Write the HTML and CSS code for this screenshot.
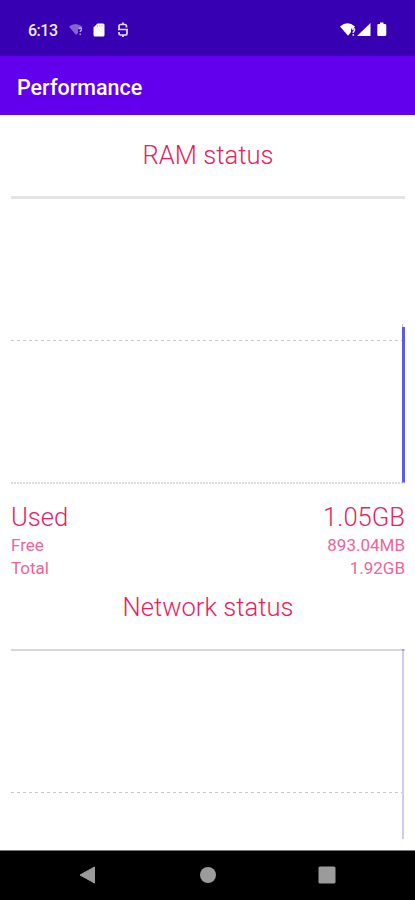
FILE: index.html
```
<!DOCTYPE html>
<html>
<head>
	<meta charset="utf-8">
	<title>Performance</title>
	<link rel="stylesheet" href="styles.css">
</head>
<body>
	<div class="status-bar">
		<span class="time">6:13</span>
		<svg class="icons-left" width="62" height="18" viewBox="0 0 62 18">
			<path d="M1 5.500Q7.500 .5 14 5.500L13 8H10V12L8 14Z" fill="#8763d1"/>
			<path d="M10.800 8Q13.500 5.500 13.500 8Q13.500 9.500 12.200 10.500V11M12.200 12.500V14" fill="none" stroke="#b8a3e8" stroke-width="1.400"/>
			<path d="M29.500 2.500H35Q36.500 2.500 36.500 4V14Q36.500 15.500 35 15.500H27Q25.500 15.500 25.500 14V6.500Z" fill="#fff"/>
			<path d="M29.500 4V6M31.800 4V6M34 4V6" stroke="#c3b3e8" stroke-width=".8"/>
			<path d="M58.500 6.500V5.500Q58.500 3.500 57 3.500H52.500Q51 3.500 51 5.500V7Q51 8.500 52.500 8.500H57.500Q59 8.500 59 10.500V12Q59 14 57.500 14H52.500Q51 14 51 12.500V11M50 8.500H60M55 1.500V4M55 14V16" fill="none" stroke="#e4dcf7" stroke-width="1.700"/>
		</svg>
		<svg class="icons-right" width="50" height="18" viewBox="0 0 50 18">
			<path d="M0 5.500Q7.500-1 15 5.500L13.500 7.500H11V11L8 14.800Z" fill="#fff"/>
			<path d="M11.800 8.500Q14.500 6.500 14.500 9Q14.500 10 13.300 11V12M13.300 13V14.700" fill="none" stroke="#e4dcf7" stroke-width="1.600"/>
			<path d="M30.500 2V15H17Z" fill="#fff"/>
			<path d="M40 1.500H43.500V3H45Q46.300 3 46.300 4.300V13.700Q46.300 15 45 15H38.500Q37.300 15 37.300 13.700V4.300Q37.300 3 38.500 3H40Z" fill="#fff"/>
		</svg>
	</div>
	<div class="app-bar">Performance</div>

	<div class="content">
		<h2 class="ram-title">RAM status</h2>
		<svg class="ram-chart" width="394" height="289" viewBox="0 0 394 289">
			<path d="M0 2.500H394" stroke="#e4e4e4" stroke-width="3"/>
			<path d="M0 145.500H394" stroke="#c9c9c9" stroke-dasharray="3 3"/>
			<path d="M0 288H394" stroke="#bababa" stroke-dasharray="2 1"/>
			<path d="M391 132H394V287.500H391Z" fill="#5b5be6"/>
			<path d="M391 129H392V132H391Z" fill="#c0bcf2"/>
		</svg>

		<div class="row used"><span>Used</span><span>1.05GB</span></div>
		<div class="row"><span>Free</span><span>893.04MB</span></div>
		<div class="row"><span>Total</span><span>1.92GB</span></div>

		<h2 class="network-title">Network status</h2>
		<svg class="network-chart" width="394" height="192" viewBox="0 0 394 192">
			<path d="M0 2H394" stroke="#d8d8d8" stroke-width="2"/>
			<path d="M0 144.500H394" stroke="#c9c9c9" stroke-dasharray="3 3"/>
			<path d="M391 1H393V191H391Z" fill="#d0cbf3"/>
			<path d="M391 1H393V3H391Z" fill="#aaa4cd"/>
		</svg>
	</div>

	<div class="nav-bar">
		<svg width="18" height="18" viewBox="0 0 18 18"><path d="M1 9L15.500 1V17Z" fill="#9b9b9b" stroke="#9b9b9b" stroke-linejoin="round"/></svg>
		<svg width="18" height="18" viewBox="0 0 18 18"><circle cx="9" cy="9" r="8" fill="#9b9b9b"/></svg>
		<svg width="18" height="18" viewBox="0 0 18 18"><rect x=".5" y=".5" width="17" height="17" rx="1.500" fill="#9b9b9b"/></svg>
	</div>
</body>
</html>
```
FILE: styles.css
```
*{
	box-sizing: border-box;
}
body{
	margin: 0;
	height: 900px;
	display: flex;
	flex-direction: column;
	overflow: hidden;
	background: #fff;
	font-family: Roboto, sans-serif;
}
svg{
	display: block;
	flex-shrink: 0;
}
.status-bar{
	display: flex;
	align-items: center;
	height: 56px;
	padding: 4px 25px 0 28px;
	background: #3700b3;
	color: #f0ebfb;
}
.time{
	width: 40px;
	font-size: 16px;
	font-weight: 500;
	letter-spacing: -0.5px;
}
.icons-right{
	margin-left: auto;
}
.app-bar{
	height: 59px;
	padding-left: 17px;
	background: #6200ee;
	color: #fff;
	font-size: 21.500px;
	font-weight: 500;
	line-height: 63px;
}
.content{
	flex: 1;
	padding: 0 10px 0 11px;
}
h2{
	margin: 0;
	color: #e91e63;
	font-size: 25.600px;
	font-weight: 300;
	text-align: center;
}
.ram-title{
	height: 80px;
	line-height: 80px;
}
.row{
	display: flex;
	justify-content: space-between;
	height: 22.500px;
	color: #f0649a;
	font-size: 17px;
	font-weight: 400;
	line-height: 22.500px;
}
.used{
	height: 50px;
	padding-top: 17px;
	color: #e91e63;
	font-size: 25.600px;
	font-weight: 300;
	line-height: 32px;
}
.network-title{
	height: 69px;
	line-height: 56px;
}
.nav-bar{
	display: flex;
	justify-content: space-between;
	align-items: center;
	height: 50px;
	padding: 0 79px 2px;
	background: #000;
	border-top: 1px solid #777;
}
```
